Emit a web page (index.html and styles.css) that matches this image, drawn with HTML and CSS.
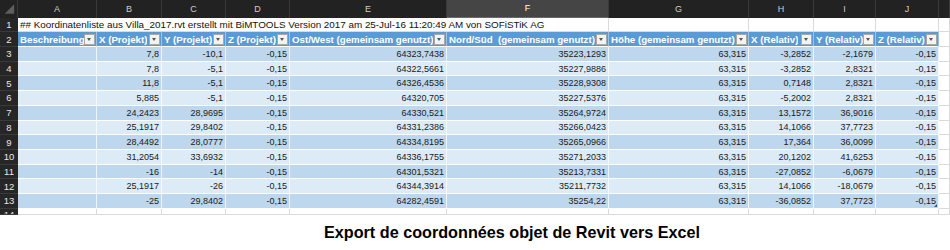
FILE: index.html
```html
<!DOCTYPE html>
<html lang="de">
<head>
<meta charset="utf-8">
<title>Export de coordonnées objet de Revit vers Excel</title>
<link rel="stylesheet" href="styles.css">
</head>
<body>
<div class="sheet">
  <div class="corner"><svg width="18" height="17" viewBox="0 0 18 17"><polygon points="15,4 15,14 5,14" fill="#5e5e5e"/></svg></div>
  <div class="ch">A</div><div class="ch">B</div><div class="ch">C</div><div class="ch">D</div><div class="ch">E</div><div class="ch sel">F</div><div class="ch">G</div><div class="ch">H</div><div class="ch">I</div><div class="ch">J</div><div class="ch"></div>

  <div class="rh">1</div>
  <div class="w title">## Koordinatenliste aus Villa_2017.rvt erstellt mit BiMTOOLS Version 2017 am 25-Jul-16 11:20:49 AM von SOFiSTiK AG</div>
  <div class="w"></div><div class="w"></div><div class="w"></div><div class="w"></div><div class="w"></div>

  <div class="rh">2</div>
  <div class="th"><span>Beschreibung</span><i class="dd"></i></div>
  <div class="th"><span>X (Projekt)</span><i class="dd"></i></div>
  <div class="th"><span>Y (Projekt)</span><i class="dd"></i></div>
  <div class="th"><span>Z (Projekt)</span><i class="dd"></i></div>
  <div class="th"><span>Ost/West (gemeinsam genutzt)</span><i class="dd"></i></div>
  <div class="th"><span>Nord/Süd  (gemeinsam genutzt)</span><i class="dd"></i></div>
  <div class="th"><span>Höhe (gemeinsam genutzt)</span><i class="dd"></i></div>
  <div class="th"><span>X (Relativ)</span><i class="dd"></i></div>
  <div class="th"><span>Y (Relativ)</span><i class="dd"></i></div>
  <div class="th"><span>Z (Relativ)</span><i class="dd"></i></div>
  <div class="w"></div>

  <div class="rh">3</div>
  <div class="d o"></div><div class="d o">7,8</div><div class="d o">-10,1</div><div class="d o">-0,15</div><div class="d o">64323,7438</div><div class="d o">35223,1293</div><div class="d o">63,315</div><div class="d o">-3,2852</div><div class="d o">-2,1679</div><div class="d o">-0,15</div><div class="w"></div>

  <div class="rh">4</div>
  <div class="d e"></div><div class="d e">7,8</div><div class="d e">-5,1</div><div class="d e">-0,15</div><div class="d e">64322,5661</div><div class="d e">35227,9886</div><div class="d e">63,315</div><div class="d e">-3,2852</div><div class="d e">2,8321</div><div class="d e">-0,15</div><div class="w"></div>

  <div class="rh">5</div>
  <div class="d o"></div><div class="d o">11,8</div><div class="d o">-5,1</div><div class="d o">-0,15</div><div class="d o">64326,4536</div><div class="d o">35228,9308</div><div class="d o">63,315</div><div class="d o">0,7148</div><div class="d o">2,8321</div><div class="d o">-0,15</div><div class="w"></div>

  <div class="rh">6</div>
  <div class="d e"></div><div class="d e">5,885</div><div class="d e">-5,1</div><div class="d e">-0,15</div><div class="d e">64320,705</div><div class="d e">35227,5376</div><div class="d e">63,315</div><div class="d e">-5,2002</div><div class="d e">2,8321</div><div class="d e">-0,15</div><div class="w"></div>

  <div class="rh">7</div>
  <div class="d o"></div><div class="d o">24,2423</div><div class="d o">28,9695</div><div class="d o">-0,15</div><div class="d o">64330,521</div><div class="d o">35264,9724</div><div class="d o">63,315</div><div class="d o">13,1572</div><div class="d o">36,9016</div><div class="d o">-0,15</div><div class="w"></div>

  <div class="rh">8</div>
  <div class="d e"></div><div class="d e">25,1917</div><div class="d e">29,8402</div><div class="d e">-0,15</div><div class="d e">64331,2386</div><div class="d e">35266,0423</div><div class="d e">63,315</div><div class="d e">14,1066</div><div class="d e">37,7723</div><div class="d e">-0,15</div><div class="w"></div>

  <div class="rh">9</div>
  <div class="d o"></div><div class="d o">28,4492</div><div class="d o">28,0777</div><div class="d o">-0,15</div><div class="d o">64334,8195</div><div class="d o">35265,0966</div><div class="d o">63,315</div><div class="d o">17,364</div><div class="d o">36,0099</div><div class="d o">-0,15</div><div class="w"></div>

  <div class="rh">10</div>
  <div class="d e"></div><div class="d e">31,2054</div><div class="d e">33,6932</div><div class="d e">-0,15</div><div class="d e">64336,1755</div><div class="d e">35271,2033</div><div class="d e">63,315</div><div class="d e">20,1202</div><div class="d e">41,6253</div><div class="d e">-0,15</div><div class="w"></div>

  <div class="rh">11</div>
  <div class="d o"></div><div class="d o">-16</div><div class="d o">-14</div><div class="d o">-0,15</div><div class="d o">64301,5321</div><div class="d o">35213,7331</div><div class="d o">63,315</div><div class="d o">-27,0852</div><div class="d o">-6,0679</div><div class="d o">-0,15</div><div class="w"></div>

  <div class="rh">12</div>
  <div class="d e"></div><div class="d e">25,1917</div><div class="d e">-26</div><div class="d e">-0,15</div><div class="d e">64344,3914</div><div class="d e">35211,7732</div><div class="d e">63,315</div><div class="d e">14,1066</div><div class="d e">-18,0679</div><div class="d e">-0,15</div><div class="w"></div>

  <div class="rh">13</div>
  <div class="d o"></div><div class="d o">-25</div><div class="d o">29,8402</div><div class="d o">-0,15</div><div class="d o">64282,4591</div><div class="d o">35254,22</div><div class="d o">63,315</div><div class="d o">-36,0852</div><div class="d o">37,7723</div><div class="d o last">-0,15<b class="handle"></b></div><div class="w"></div>

  <div class="rh rh-cut">14</div>
  <div class="w"></div><div class="w"></div><div class="w"></div><div class="w"></div><div class="w"></div><div class="w"></div><div class="w"></div><div class="w"></div><div class="w"></div><div class="w"></div><div class="w"></div>
</div>
<div class="caption">Export de coordonnées objet de Revit vers Excel</div>
</body>
</html>
```
FILE: styles.css
```css
html, body {
  margin: 0;
  padding: 0;
  background: #ffffff;
}

.sheet {
  display: grid;
  grid-template-columns: 18px 79px 65px 64px 64px 157px 162px 140px 65px 62px 63px 1fr;
  grid-template-rows: 17.5px repeat(13, 14.73px) 6px;
  height: 215px;
  overflow: hidden;
  font-family: "Liberation Sans", Arial, sans-serif;
  font-size: 9px;
  color: #1a1a1a;
}

.sheet > div {
  box-sizing: border-box;
  display: flex;
  align-items: center;
  overflow: hidden;
  white-space: nowrap;
  min-width: 0;
}

.corner {
  background: #222222;
  border-right: 1px solid #3a3a3a;
}

.corner svg {
  display: block;
}

.ch {
  background: #222222;
  color: #cfcfcf;
  justify-content: center;
  border-right: 1px solid #3a3a3a;
}

.ch.sel {
  background: #454545;
  color: #ffffff;
  border-bottom: 1px solid #6a6a6a;
}

.rh {
  background: #262626;
  color: #e6e6e6;
  font-size: 9.5px;
  justify-content: center;
  border-bottom: 1px solid #3a3a3a;
}

.rh-cut {
  align-items: flex-start !important;
}

.w {
  background: #ffffff;
  border-right: 1px solid #dadada;
  border-bottom: 1px solid #dadada;
}

.title {
  grid-column: 2 / 8;
  color: #111111;
  font-size: 9.85px;
  padding-left: 2px;
}

.th {
  background: #5b9bd5;
  color: #ffffff;
  font-weight: 700;
  font-size: 9.7px;
  padding-left: 2px;
  justify-content: space-between;
  border-right: 1px solid #9cc2e5;
  border-bottom: 1px solid #ffffff;
}

.th span {
  overflow: hidden;
  white-space: pre;
}

.dd {
  flex: none;
  position: relative;
  width: 9px;
  height: 9px;
  margin-right: 1px;
  background: #f3f3f3;
  border: 1px solid #a8a8a8;
}

.dd::after {
  content: "";
  position: absolute;
  left: 2px;
  top: 3px;
  border-left: 2.5px solid transparent;
  border-right: 2.5px solid transparent;
  border-top: 3px solid #555555;
}

.d {
  justify-content: flex-end;
  padding-right: 2px;
  border-right: 1px solid rgba(255, 255, 255, 0.75);
  border-bottom: 1px solid #ffffff;
}

.d.o {
  background: #bdd7ee;
}

.d.e {
  background: #ddebf7;
}

.d.last {
  position: relative;
}

.handle {
  position: absolute;
  right: 1px;
  bottom: 1px;
  width: 0;
  height: 0;
  border-left: 3px solid transparent;
  border-bottom: 3px solid #2f5597;
}

.caption {
  display: flex;
  justify-content: center;
  padding-left: 74px;
  margin-top: 7px;
  font-family: "Liberation Sans", Arial, sans-serif;
  font-weight: 700;
  font-size: 16.2px;
  line-height: 20px;
  color: #000000;
}
```
